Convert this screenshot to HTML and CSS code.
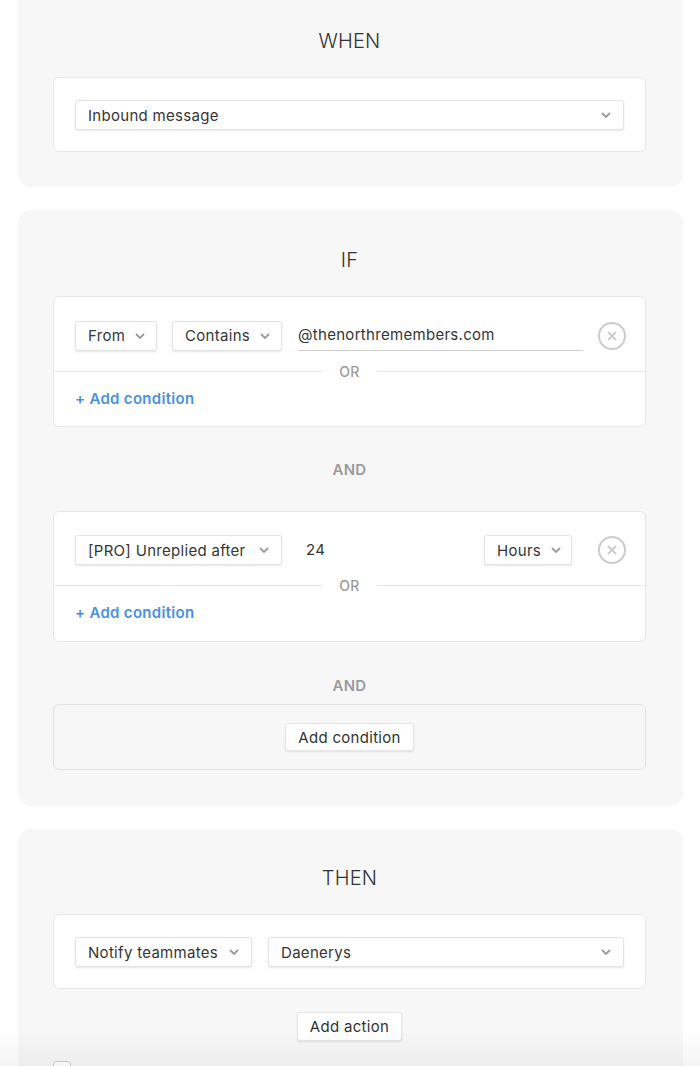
FILE: index.html
```html
<!DOCTYPE html>
<html lang="en">
  <head>
    <meta charset="UTF-8"/>
    <title>Rule editor</title>
    <link rel="stylesheet" href="styles.css">
  </head>
  <body>
    <main class="rule">

      <section class="panel panel-first">
        <h2 class="panel-title">WHEN</h2>
        <div class="card">
          <div class="select select-wide">
            <span class="select-text">Inbound message</span>
            <svg class="chevron" width="10" height="6" viewBox="0 0 10 6"><polyline points="1,1 5,5 9,1"/></svg>
          </div>
        </div>
      </section>

      <section class="panel">
        <h2 class="panel-title">IF</h2>

        <div class="card card-flush">
          <div class="cond-row">
            <div class="select select-from">
              <span class="select-text">From</span>
              <svg class="chevron" width="10" height="6" viewBox="0 0 10 6"><polyline points="1,1 5,5 9,1"/></svg>
            </div>
            <div class="select select-op">
              <span class="select-text">Contains</span>
              <svg class="chevron" width="10" height="6" viewBox="0 0 10 6"><polyline points="1,1 5,5 9,1"/></svg>
            </div>
            <div class="value">
              <span class="text-input">@thenorthremembers.com</span>
            </div>
            <button class="remove" type="button" aria-label="Remove">
              <svg width="28" height="28" viewBox="0 0 28 28"><circle cx="14" cy="14" r="13"/><path d="M10 10 L18 18 M18 10 L10 18"/></svg>
            </button>
          </div>
          <div class="or">OR</div>
          <a class="add-link" href="#">+ Add condition</a>
        </div>

        <div class="and">AND</div>

        <div class="card card-flush">
          <div class="cond-row">
            <div class="select select-field">
              <span class="select-text">[PRO] Unreplied after</span>
              <svg class="chevron" width="10" height="6" viewBox="0 0 10 6"><polyline points="1,1 5,5 9,1"/></svg>
            </div>
            <div class="value">
              <span class="number-input">24</span>
              <div class="select select-unit">
                <span class="select-text">Hours</span>
                <svg class="chevron" width="10" height="6" viewBox="0 0 10 6"><polyline points="1,1 5,5 9,1"/></svg>
              </div>
            </div>
            <button class="remove" type="button" aria-label="Remove">
              <svg width="28" height="28" viewBox="0 0 28 28"><circle cx="14" cy="14" r="13"/><path d="M10 10 L18 18 M18 10 L10 18"/></svg>
            </button>
          </div>
          <div class="or">OR</div>
          <a class="add-link add-link-tall" href="#">+ Add condition</a>
        </div>

        <div class="and and-last">AND</div>

        <div class="card card-empty">
          <button class="btn btn-small" type="button">Add condition</button>
        </div>
      </section>

      <section class="panel panel-then">
        <h2 class="panel-title">THEN</h2>
        <div class="card">
          <div class="action-row">
            <div class="select select-action">
              <span class="select-text">Notify teammates</span>
              <svg class="chevron" width="10" height="6" viewBox="0 0 10 6"><polyline points="1,1 5,5 9,1"/></svg>
            </div>
            <div class="select select-wide">
              <span class="select-text">Daenerys</span>
              <svg class="chevron" width="10" height="6" viewBox="0 0 10 6"><polyline points="1,1 5,5 9,1"/></svg>
            </div>
          </div>
        </div>
        <div class="center">
          <button class="btn" type="button">Add action</button>
        </div>
        <div class="options">
          <span class="checkbox"></span>
        </div>
      </section>

    </main>
    <div class="bottom-shade"></div>
  </body>
</html>
```

FILE: styles.css
```css
body {
  margin: 0;
  background: #fff;
  font-family: Inter, "Noto Sans", sans-serif;
  font-size: 15px;
  letter-spacing: 0.3px;
  color: #363636;
}

.rule {
  padding: 0 17px 40px 18px;
  display: flex;
  flex-direction: column;
  gap: 23px;
}

.panel {
  background: #f7f7f7;
  border-radius: 12px;
  padding: 38px 37px 36px 35px;
}
.panel-first {
  border-radius: 0 0 12px 12px;
  padding-top: 29px;
  padding-bottom: 35px;
}
.panel-then {
  padding-top: 37px;
}

.panel-title {
  margin: 0 0 24px;
  font-size: 20px;
  line-height: 24px;
  font-weight: 300;
  letter-spacing: 0.2px;
  text-align: center;
  color: #333;
}

.card {
  background: #fff;
  border: 1px solid #e6e6e6;
  border-radius: 6px;
  padding: 22px 21px 21px;
}
.card-flush {
  padding: 0;
}
.card-empty {
  background: #f7f7f7;
  border-color: #e2e2e2;
  padding: 18px;
  display: flex;
  justify-content: center;
}

/* selects */
.select {
  box-sizing: border-box;
  height: 30px;
  display: flex;
  align-items: center;
  justify-content: space-between;
  gap: 10px;
  padding: 0 12px;
  background: #fff;
  border: 1px solid #e4e4e4;
  border-radius: 3px;
  box-shadow: 0 1px 2px rgba(0, 0, 0, 0.1);
  white-space: nowrap;
}
.select-wide { flex: 1; }
.select-from { width: 82px; }
.select-op { width: 110px; }
.select-field { width: 207px; }
.select-unit { width: 88px; margin-right: 11px; }
.select-action { width: 177px; }

.chevron {
  flex: none;
  fill: none;
  stroke: #9a9a9a;
  stroke-width: 1.8;
}

/* condition rows */
.cond-row {
  display: flex;
  align-items: center;
  gap: 15px;
  padding: 23px 19px 12px 21px;
}
.value {
  flex: 1;
  display: flex;
  align-items: center;
  gap: 16px;
  margin-left: 1px;
}
.text-input {
  flex: 1;
  height: 30px;
  line-height: 30px;
  border-bottom: 1px solid #cfcfcf;
}
.number-input {
  flex: 1;
  padding-left: 8px;
  line-height: 30px;
}

.remove {
  padding: 0;
  border: 0;
  background: none;
  width: 28px;
  height: 28px;
  display: block;
}
.remove svg {
  display: block;
  fill: none;
  stroke: #cccccc;
  stroke-width: 2;
}

.or {
  display: flex;
  align-items: center;
  gap: 17px;
  height: 16px;
  font-size: 14px;
  font-weight: 500;
  color: #9b9b9b;
}
.or::before,
.or::after {
  content: "";
  flex: 1;
  height: 1px;
  background: #e6e6e6;
}

.add-link {
  display: block;
  padding: 10px 21px 17px;
  line-height: 20px;
  color: #4a90e2;
  font-weight: 600;
  text-decoration: none;
}
.add-link-tall {
  padding-bottom: 18px;
}

.and {
  margin: 33px 0 31px;
  line-height: 20px;
  text-align: center;
  font-weight: 600;
  color: #9b9b9b;
}
.and-last {
  margin: 34px 0 8px;
}

.action-row {
  display: flex;
  gap: 16px;
}

.btn {
  height: 29px;
  padding: 0 12px;
  font: inherit;
  letter-spacing: inherit;
  color: #333;
  background: #fff;
  border: 1px solid #e6e6e6;
  border-radius: 3px;
  box-shadow: 0 1px 2px rgba(0, 0, 0, 0.1);
}
.btn-small {
  height: 28px;
}

.center {
  display: flex;
  justify-content: center;
  margin-top: 23px;
}

.options {
  margin-top: 20px;
}
.checkbox {
  display: block;
  width: 16px;
  height: 16px;
  border: 1px solid #d0d0d0;
  border-radius: 3px;
  background: #fff;
}

.bottom-shade {
  position: fixed;
  left: 0;
  right: 0;
  bottom: 0;
  height: 36px;
  background: linear-gradient(rgba(0, 0, 0, 0), rgba(0, 0, 0, 0.04));
  pointer-events: none;
}
```
